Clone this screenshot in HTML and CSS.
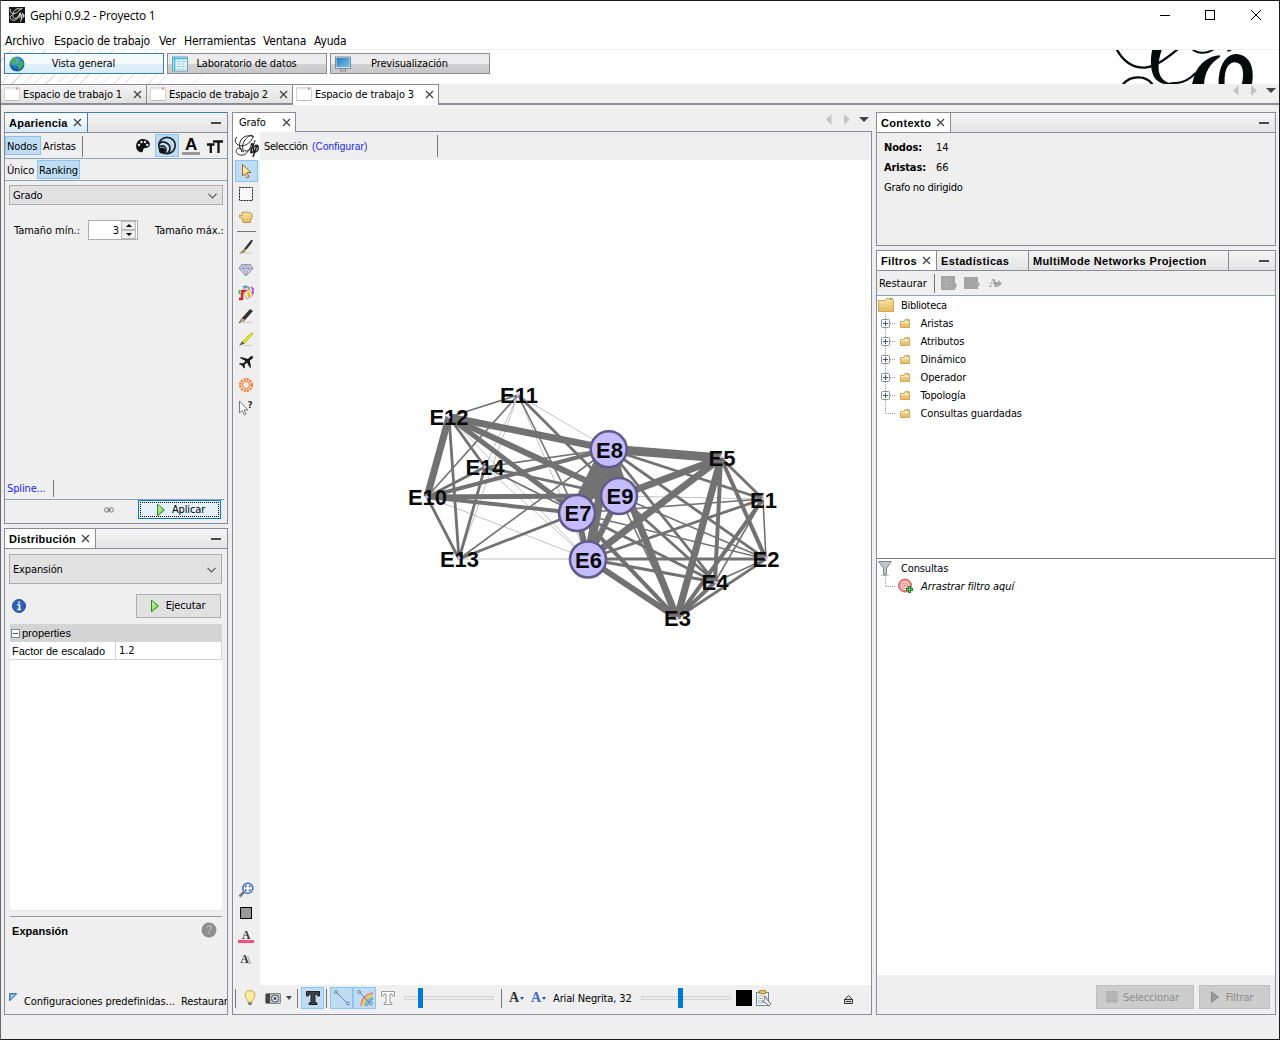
FILE: index.html
```html
<!DOCTYPE html>
<html lang="es">
<head>
<meta charset="utf-8">
<title>Gephi 0.9.2 - Proyecto 1</title>
<link rel="stylesheet" href="styles.css">
</head>
<body>
<svg class="defs" width="0" height="0">
  <defs>
    <linearGradient id="gold" x1="0" y1="0" x2="0" y2="1"><stop offset="0" stop-color="#fbe6a6"/><stop offset="1" stop-color="#e3b95f"/></linearGradient>
    <linearGradient id="play" x1="0" y1="0" x2="1" y2="1"><stop offset="0" stop-color="#e4f7c6"/><stop offset="1" stop-color="#5cbb2c"/></linearGradient>
    <linearGradient id="screen" x1="0" y1="0" x2="1" y2="1"><stop offset="0" stop-color="#2b7cc0"/><stop offset="1" stop-color="#72c0f0"/></linearGradient>
    <radialGradient id="globe" cx=".4" cy=".3"><stop offset="0" stop-color="#6cc4ee"/><stop offset="1" stop-color="#1761a8"/></radialGradient>
  </defs>
  <symbol id="x" viewBox="0 0 9 9"><path d="M1 1L8 8M8 1L1 8" stroke="#444" stroke-width="1.300" fill="none"/></symbol>
  <symbol id="plus" viewBox="0 0 9 9"><rect x=".5" y=".5" width="8" height="8" rx="1" fill="#fafafa" stroke="#8f8f8f"/><path d="M2 4.500H7M4.500 2V7" stroke="#3b56a0"/></symbol>
  <symbol id="folder" viewBox="0 0 16 14"><path d="M.5 13.500V2.500H7L8.500.5H14.500L15.500 2.500V13.500Z" fill="url(#gold)" stroke="#cfa457"/><path d="M12 1.500H14" stroke="#3bb8e8"/></symbol>
  <symbol id="folder-s" viewBox="0 0 10 9"><path d="M.5 8.500V2.500H4L5 .5H9L9.500 2V8.500Z" fill="url(#gold)" stroke="#d3a659"/><path d="M1 3.500H9" stroke="#fff1c4"/><path d="M7 1.500H8.500" stroke="#57b9d8"/></symbol>
  <symbol id="sheet" viewBox="0 0 16 14"><path d="M.5.500H15.500V13.500H.5Z" fill="#fff" stroke="#d4d4d4"/><path d="M1 1.500H15" stroke="#e7e7e7" stroke-width="2"/><path d="M13 .500V2.500" stroke="#d98c8c" stroke-width="2"/><path d="M1 13.500H15" stroke="#bbb"/></symbol>
  <symbol id="run" viewBox="0 0 8 12"><path d="M.5.200V11.800L7.500 6Z" fill="url(#play)" stroke="#258b15"/></symbol>
  <symbol id="chev" viewBox="0 0 9 6"><path d="M.5.800L4.500 4.800L8.500.800" fill="none" stroke="#555" stroke-width="1.200"/></symbol>
  <symbol id="script" viewBox="0 0 26 24"><g fill="none" stroke="#222" stroke-width="1"><path d="M3 3C-1 6 2 12 8 12C15 11 19 5 19 2C18 0 14 2 11 6C7 12 8 17 12 17C16 17 20 12 21 6M20 3C17 1 10 1 7 6C4 11 6 17 10 18M18 9C15 18 11 22 6 21C1 20 1 15 5 14C8 14 9 17 7 18"/><path d="M17 11C19 9 20 10 18 14C16 19 17 20 20 17" stroke-width="1.800"/><path d="M20 17C18 13 22 10 24 12C25 16 22 19 20 18M23 11L19 23" stroke-width="1.500"/></g></symbol>
</svg>

<div class="window">
  <header class="titlebar">
    <svg class="app-icon" width="16" height="16" viewBox="0 0 26 26"><rect width="26" height="26" fill="#161616"/><g fill="none" stroke="#eee" stroke-width="1.500"><path d="M2 3C1 11 9 13 14 8C19 2 23 2 21 3C20 5 17 2 13 3C7 5 5 13 7 17C9 21 15 17 19 9C15 19 11 23 5 21C1 19 1 15 5 13"/><path d="M16 11C20 8 18 20 16 17M24 12C25 19 18 20 20 14C22 9 25 13 24 16M22 10L19 24"/></g></svg>
    <span class="title">Gephi 0.9.2 - Proyecto 1</span>
    <svg class="controls" width="102" height="12" viewBox="0 0 102 12" fill="none" stroke="#000"><path d="M0 5.500H10"/><rect x="45.500" y=".5" width="9" height="9"/><path d="M91 0L101 10M101 0L91 10"/></svg>
  </header>
  <nav class="menubar"><span class="m1">Archivo</span><span class="m2">Espacio de trabajo</span><span class="m3">Ver</span><span class="m4">Herramientas</span><span class="m5">Ventana</span><span>Ayuda</span></nav>

  <div class="banner">
    <button class="persp on"><svg width="16" height="16" viewBox="0 0 16 16"><circle cx="8" cy="8" r="7.500" fill="url(#globe)"/><path d="M2 4C4 1 7 1 8 2L7 4L8 6L5 7L5 9L2 8ZM9 6L13 5L15 8L12 12L10 14L9 10ZM10 2L13 3L12 4Z" fill="#46ad57"/></svg><span>Vista general</span></button>
    <button class="persp"><svg width="16" height="16" viewBox="0 0 16 16"><rect x=".5" y="1" width="15" height="14" fill="#fff" stroke="#6aa2b8"/><path d="M1 2.500H15M2.500 1V15" stroke="#51c0e4" stroke-width="2"/><path d="M4 5.500H15M4 8H15M4 10.500H15M4 13H15M7 4V15M11 4V15" stroke="#9fd8ea"/></svg><span>Laboratorio de datos</span></button>
    <button class="persp"><svg width="16" height="16" viewBox="0 0 16 16"><rect x=".5" y="1" width="15" height="11.500" fill="#ddd" stroke="#78909c"/><rect x="1.500" y="2" width="13" height="9" fill="url(#screen)"/><path d="M5.500 13H10.500V15H5.500Z" fill="#ddd" stroke="#888"/></svg><span>Previsualización</span></button>
    <svg class="brand" width="144" height="34" viewBox="100 150 432 102"><g fill="none" stroke="#060a0a"><path d="M110 146C132 188 164 204 196 203C232 198 266 171 296 146" stroke-width="7"/><path d="M128 256C148 226 200 222 220 256" stroke-width="7"/><path d="M338 148C356 164 386 160 405 146" stroke-width="6"/><path d="M348 219C330 238 306 252 276 249" stroke-width="6"/><path d="M443 153C449 153 452 151 455 148" stroke-width="5"/></g><g fill="#060a0a"><path d="M218 148H247C230 193 232 238 266 248L300 245C275 258 238 258 222 229C210 203 213 169 218 148Z"/><path d="M421 166L421 171C390 190 374 220 373 256H336L346 220C362 188 388 168 421 166Z"/><path d="M417 256C415 196 440 160 472 162C510 166 527 203 516 256H486C496 211 488 187 463 187C440 191 433 218 435 256Z"/></g></svg>
  </div>

  <div class="doc-tabs">
    <div class="doc-tab"><svg width="16" height="14"><use href="#sheet"/></svg><span>Espacio de trabajo 1</span><svg width="9" height="9"><use href="#x"/></svg></div>
    <div class="doc-tab"><svg width="16" height="14"><use href="#sheet"/></svg><span>Espacio de trabajo 2</span><svg width="9" height="9"><use href="#x"/></svg></div>
    <div class="doc-tab on"><svg width="16" height="14"><use href="#sheet"/></svg><span>Espacio de trabajo 3</span><svg width="9" height="9"><use href="#x"/></svg></div>
    <svg class="tabnav" width="44" height="11" viewBox="0 0 44 11"><path d="M5.500 0V11L0 5.500ZM18 0V11L24 5.500Z" fill="#c5c5c5"/><path d="M33 3H43L38 8Z" fill="#444"/></svg>
  </div>

  <main class="main">
    <div class="left">
      <section class="panel appearance">
        <div class="head"><div class="tab on blue"><b>Apariencia</b><svg width="9" height="9"><use href="#x"/></svg></div><i class="min"></i></div>
        <div class="ap-row one">
          <span class="toggle">Nodos</span><span class="plain">Aristas</span><i class="vsep"></i>
          <svg class="ap-icons" width="89" height="24" viewBox="0 0 89 24">
            <path d="M8 4C0 4-1 15 5 17C10 19 6 12 11 13C17 13 16 4 8 4Z" fill="#111"/><g fill="#eee"><circle cx="4" cy="10" r="1.200"/><circle cx="6.500" cy="7" r="1.200"/><circle cx="10" cy="7" r="1.200"/><circle cx="12.300" cy="10" r="1.200"/></g>
            <rect x="20.500" y="-.5" width="23" height="22" fill="#bfdcf3" stroke="#8ac4f2"/><g fill="none" stroke="#1b2227" stroke-width="1.700"><circle cx="32" cy="10.500" r="8.200"/><path d="M24 9.500C26 4.500 35 7.500 35 13.500Q35 16.500 32 18.500M25 11.500Q30 9.500 31 14.500Q31 17.500 29 18.500"/></g><circle cx="27" cy="15.500" r="3" fill="#111"/>
            <text x="56" y="14.500" text-anchor="middle" class="letter-a">A</text><path d="M47 18.500H65" stroke="#999" stroke-width="3"/>
            <path d="M72 9.500H79.500M75.800 9.500V18M78 6.500H88M83.500 6.500V18" stroke="#111" stroke-width="2.300"/>
          </svg>
        </div>
        <div class="ap-row two"><span class="plain">Único</span><span class="toggle">Ranking</span></div>
        <div class="combo grade"><span>Grado</span><svg width="9" height="6"><use href="#chev"/></svg></div>
        <div class="sizes"><span class="smin">Tamaño mín.:</span><div class="spin"><span>3</span><div class="arrows"><i><svg width="6" height="3"><path d="M0 3H6L3 0Z"/></svg></i><i><svg width="6" height="3"><path d="M0 0H6L3 3Z"/></svg></i></div></div><span>Tamaño máx.:</span></div>
        <div class="spline"><a>Spline...</a><i class="vsep"></i></div>
        <div class="apply"><svg class="chain" width="10" height="6" viewBox="0 0 10 6" fill="none" stroke="#777"><rect x=".5" y=".8" width="4.500" height="4.300" rx="2"/><rect x="5" y=".8" width="4.500" height="4.300" rx="2"/><path d="M3 3H7"/></svg><button class="btn focus"><svg width="8" height="12"><use href="#run"/></svg><span>Aplicar</span></button></div>
      </section>

      <section class="panel layout">
        <div class="head"><div class="tab on"><b>Distribución</b><svg width="9" height="9"><use href="#x"/></svg></div><i class="min"></i></div>
        <div class="combo algo"><span>Expansión</span><svg width="9" height="6"><use href="#chev"/></svg></div>
        <div class="exec"><svg width="14" height="14" viewBox="0 0 14 14"><circle cx="7" cy="7" r="6.500" fill="#2d60b8" stroke="#234f9c"/><path d="M7 2.500V4.500M5.500 6H7.500V10.500M5.200 10.500H9" stroke="#fff" stroke-width="1.600" fill="none"/></svg><button class="btn"><svg width="8" height="12"><use href="#run"/></svg><span>Ejecutar</span></button></div>
        <div class="sheet">
          <div class="group"><svg width="9" height="9" viewBox="0 0 9 9"><rect x=".5" y=".5" width="8" height="8" fill="#fff" stroke="#888"/><path d="M2 4.500H7" stroke="#3b56a0"/></svg><span>properties</span></div>
          <div class="prop"><span class="pname">Factor de escalado</span><span class="pval">1.2</span></div>
        </div>
        <div class="desc"><b>Expansión</b><svg width="16" height="16" viewBox="0 0 16 16"><circle cx="8" cy="8" r="7.500" fill="#8d8d8d"/><text x="8" y="12" text-anchor="middle" class="qmark">?</text></svg></div>
        <div class="presets"><svg width="9" height="9" viewBox="0 0 9 9"><path d="M.7 1.700H7.700L.7 8.700Z" fill="#8fc8ec" stroke="#235c8c"/></svg><span class="cfg">Configuraciones predefinidas...</span><span>Restaurar</span></div>
      </section>
    </div>

    <section class="center">
      <div class="graph-head"><div class="gtab"><span>Grafo</span><svg width="9" height="9"><use href="#x"/></svg></div><div class="gline"><svg width="44" height="11" viewBox="0 0 44 11"><path d="M5.500 0V11L0 5.500ZM18 0V11L24 5.500Z" fill="#c5c5c5"/><path d="M33 3H43L38 8Z" fill="#444"/></svg></div></div>
      <div class="graph-body">
        <div class="gtools">
          <div class="logo"><svg width="26" height="24"><use href="#script"/></svg></div>
          <div class="tool sel"><svg viewBox="0 0 16 16"><path d="M3.500 1.500V13L6 10.500L8 15L10 14L8 9.500H12Z" fill="#ffe3a2" stroke="#8d6c36"/></svg></div>
          <div class="tool"><svg viewBox="0 0 16 16"><rect x="1.500" y="1.500" width="13" height="13" fill="#f8f8f8" stroke="#111" stroke-dasharray="2 1"/></svg></div>
          <div class="tool"><svg viewBox="0 0 16 16"><path d="M5 13.500L4.500 11L1.500 8V6L4 7V3.500L6 3L7 4L8.500 2.500L10 4L12 3L14 5V9L12.500 11V13.500Z" fill="url(#gold)" stroke="#b5822f" stroke-width=".8"/></svg></div>
          <i class="hsep"></i>
          <div class="tool"><svg viewBox="0 0 16 16"><path d="M4 14H14" stroke="#ccc"/><path d="M6 10L13 1L15 1L13 5L8 11Z" fill="#333"/><path d="M5.500 10L8 12L5 14L1 15Z" fill="#9d8759"/></svg></div>
          <div class="tool"><svg viewBox="0 0 16 16"><path d="M3.500 2.500H12.500L15 6.500L8 14L1 6.500Z" fill="#cfcfe6" stroke="#9292b1"/><path d="M1 6.500H15M4 3L5.500 6.500L8 14L10.500 6.500L12 3M8 3L5.500 6.500M8 3L10.500 6.500" stroke="#8c8cad" stroke-width=".7" fill="none"/></svg></div>
          <div class="tool"><svg viewBox="0 0 16 16"><path d="M1.500 5V9" stroke="#4ab660" stroke-width="2"/><path d="M5 2.500L9 1.500" stroke="#58a9d6" stroke-width="3"/><path d="M13 2L15 4V9" fill="none" stroke="#b664ca" stroke-width="2"/><path d="M3 6H7L4 9V14H1" fill="none" stroke="#cf2927" stroke-width="2.500"/><path d="M5.500 8L11 4L15 10L9 14Z" fill="#fff2cc" stroke="#9c7667" stroke-width=".7"/><path d="M9 7L10 12L12.500 11L11 6Z" fill="#f2b51c"/><path d="M8 2H11V5" fill="none" stroke="#777"/></svg></div>
          <div class="tool"><svg viewBox="0 0 16 16"><path d="M5 14.500H14" stroke="#ccc"/><path d="M4 10L12 1L15 3L7 12Z" fill="#333"/><path d="M4 10L7 12L1 15Z" fill="#e5bd78" stroke="#333" stroke-width=".6"/></svg></div>
          <div class="tool"><svg viewBox="0 0 16 16"><path d="M5 14.500H14" stroke="#ccc"/><path d="M4 11L13.500 1.500L15 3L6 13Z" fill="#eee71f" stroke="#a5a01e" stroke-width=".7"/><path d="M4 10.500L6.500 12.500L1 15Z" fill="#555"/></svg></div>
          <div class="tool"><svg viewBox="0 0 16 16"><path d="M15 2.500Q13 1 10 5L3 3L2 4L7.500 7L5 9.500L2 9L1 10L4 11.500L6 14.500L7 13.500L6.500 11L9 8.500L12 14L13 13L11.800 6.500Q16 4 15 2.500Z" fill="#171717"/></svg></div>
          <div class="tool"><svg viewBox="0 0 16 16"><g fill="none" stroke="#ff782c"><circle cx="8" cy="8" r="5.800" stroke-width="2.500" stroke-dasharray="2 1.037"/><circle cx="8" cy="8" r="3.500"/></g></svg></div>
          <div class="tool"><svg viewBox="0 0 16 16"><path d="M1.500 1V13L4 10.500L6.500 15L8 14L6 10H10Z" fill="#fff" stroke="#777"/><text x="9.500" y="7.500" class="help-mark">?</text></svg></div>
          <div class="grow"></div>
          <div class="tool"><svg viewBox="0 0 16 16"><path d="M6 10L1.500 14.500" stroke="#777" stroke-width="2.500"/><circle cx="9.800" cy="6.200" r="5" fill="#fff" stroke="#3e65c8" stroke-width="1.500"/><path d="M7.500 5.500V4H9M10.500 4H12V5.500M12 7V8.500H10.500M9 8.500H7.500V7" fill="none" stroke="#26489b"/></svg></div>
          <div class="tool"><svg viewBox="0 0 16 16"><rect x="2.500" y="2.500" width="11" height="11" fill="#999" stroke="#000"/></svg></div>
          <div class="tool"><svg viewBox="0 0 16 16"><text x="8" y="10.500" text-anchor="middle" class="serif-s">A</text><path d="M0 13.500H16" stroke="#ff4d82" stroke-width="3"/></svg></div>
          <div class="tool"><svg viewBox="0 0 16 16"><text x="6.500" y="12" text-anchor="middle" class="serif-s shade">A</text></svg></div>
        </div>
        <div class="gview">
          <div class="selbar"><span class="seltext">Selección</span><a>(Configurar)</a><i class="vsep"></i></div>
          <svg class="graph" width="611" height="825" viewBox="260 160 611 825">
            <g stroke="#727272" fill="none">
              <g stroke-width=".6" stroke="#999"><path d="M518 395L485 467M518 395L459 559M518 395L609 449M518 395L588 559M449 417L588 559M485 467L588 559M427 497L588 559M459 559L588 559M619 496L763 499"/></g>
              <g stroke-width="1.600"><path d="M518 395L449 417M518 395L427 497M518 395L577 513M485 467L609 449M485 467L577 513M459 559L609 449M619 496L766 559M577 513L766 559M577 513L763 499M763 499L766 559M763 499L715 582M766 559L715 582M619 496L677 618"/></g>
              <g stroke-width="2.800"><path d="M518 395L619 496M449 417L485 467M427 497L485 467M427 497L459 559M485 467L619 496M485 467L459 559M449 417L459 559M459 559L577 513M609 449L763 499M609 449L766 559M609 449L715 582M588 559L763 499M588 559L715 582M577 513L715 582M619 496L715 582M721 458L763 499M766 559L677 618M588 559L766 559"/></g>
              <g stroke-width="4"><path d="M427 497L609 449M427 497L577 513M721 458L766 559M721 458L715 582M763 499L677 618M715 582L677 618M577 513L677 618"/></g>
              <g stroke-width="5"><path d="M427 497L619 496M449 417L577 513"/></g>
              <g stroke-width="6"><path d="M449 417L619 496M588 559L677 618M619 496L588 559M577 513L588 559"/></g>
              <g stroke-width="7"><path d="M449 417L427 497M449 417L609 449M609 449L677 618M619 496L721 458M588 559L721 458M721 458L677 618"/></g>
              <path d="M609 449L721 458" stroke-width="9"/><path d="M609 449L588 559" stroke-width="9"/>
              <path d="M609 449L577 513" stroke-width="16"/><path d="M609 449L619 496" stroke-width="16"/>
            </g>
            <g fill="#c4bcff" stroke="#625b8a" stroke-width="2.600"><circle cx="608.700" cy="449.300" r="18"/><circle cx="619" cy="496" r="18"/><circle cx="577" cy="513" r="18"/><circle cx="588" cy="559.500" r="18"/></g>
            <g class="labels" text-anchor="middle"><text x="519" y="402.500">E11</text><text x="449" y="424.700">E12</text><text x="485" y="475">E14</text><text x="427.500" y="505">E10</text><text x="459.500" y="566.500">E13</text><text x="609.500" y="457.500">E8</text><text x="620" y="504">E9</text><text x="578" y="521">E7</text><text x="588.500" y="567.500">E6</text><text x="722" y="465.500">E5</text><text x="763.500" y="507.500">E1</text><text x="766" y="566.500">E2</text><text x="715" y="590">E4</text><text x="677.500" y="626">E3</text></g>
            <g fill="#c4bcff"><circle cx="518" cy="395" r="1.500"/><circle cx="449" cy="417" r="1.500"/><circle cx="485" cy="467" r="1.500"/><circle cx="427" cy="497" r="1.500"/><circle cx="459" cy="558" r="1.500"/><circle cx="721" cy="457" r="1.500"/><circle cx="763" cy="499" r="1.500"/><circle cx="766" cy="558" r="1.500"/><circle cx="715" cy="582" r="1.500"/><circle cx="677" cy="618" r="1.500"/></g>
          </svg>
        </div>
      </div>
      <div class="gbottom">
        <i class="vsep"></i>
        <svg class="bulb" width="16" height="16" viewBox="0 0 16 16"><path d="M6 12C6 9 3 8 3 5C3 2 5 .7 8 .7S13 2 13 5C13 8 10 9 10 12Z" fill="#ffeb99" stroke="#c9a64f"/><path d="M6 12.500H10V14L8 15.500L6 14Z" fill="#777"/></svg>
        <svg class="cam" width="16" height="13" viewBox="0 0 16 13"><rect x=".5" y="1.500" width="15" height="10" rx="1" fill="#bbb" stroke="#888"/><rect x="1" y="2" width="4" height="9" fill="#444"/><circle cx="10" cy="6.500" r="3.500" fill="#eee" stroke="#555"/><circle cx="10" cy="6.500" r="1.800" fill="#536c9b"/></svg>
        <svg class="drop" width="6" height="4"><path d="M0 0H6L3 4Z" fill="#444"/></svg>
        <i class="vsep s2"></i>
        <div class="cell sel"><svg width="16" height="16" viewBox="0 0 16 16"><path d="M1.500 1.500H14.500V6H12.500L12 4H10V12.500L12 13V14.500H4V13L6 12.500V4H4L3.500 6H1.500Z" fill="#3d4349" stroke="#222"/></svg></div>
        <i class="vsep s3"></i>
        <div class="cell sel"><svg width="16" height="16" viewBox="0 0 16 16"><path d="M2 2L14 14" stroke="#5d87b9"/><circle cx="2" cy="2" r="1.400" fill="#fff" stroke="#4c78b0"/><circle cx="14" cy="13.500" r="1.400" fill="#fff" stroke="#4c78b0"/></svg></div><div class="cell sel"><svg width="16" height="16" viewBox="0 0 16 16"><g fill="none" stroke-width="1.800"><path d="M4 16Q5 5 16 3" stroke="#ea887b"/><path d="M6 16Q7 7 16 5" stroke="#e8cf68"/><path d="M8 16Q9 9 16 7" stroke="#76c394"/><path d="M10 16Q11 11 16 9" stroke="#7a96db"/></g><path d="M2 2L14 14" stroke="#5d87b9"/><circle cx="2" cy="2" r="1.400" fill="#fff" stroke="#4c78b0"/><circle cx="14" cy="13.500" r="1.400" fill="#fff" stroke="#4c78b0"/></svg></div><div class="cell"><svg width="16" height="16" viewBox="0 0 16 16"><path d="M1.500 1.500H14.500V6H12.500L12 4H10V12.500L12 13V14.500H4V13L6 12.500V4H4L3.500 6H1.500Z" fill="#f8f8f8" stroke="#999"/></svg></div>
        <div class="slider first"><i></i></div>
        <i class="vsep s4"></i>
        <span class="font-a">A</span><svg class="dd" width="4" height="3"><path d="M0 0H4L2 3Z" fill="#2c50a4"/></svg>
        <span class="font-a blue-a">A</span><svg class="dd" width="4" height="3"><path d="M0 0H4L2 3Z" fill="#2c50a4"/></svg>
        <span class="fname">Arial Negrita, 32</span>
        <div class="slider second"><i></i></div>
        <i class="black"></i>
        <svg class="clip" width="17" height="17" viewBox="0 0 17 17"><rect x="1.500" y="2.500" width="12" height="13" fill="#f6fafc" stroke="#6b8794"/><rect x="4" y=".7" width="7" height="3" rx="1" fill="#eac363" stroke="#a07b2c"/><path d="M3 6H11M3 8.500H8M3 11H7M3 13H8" stroke="#9fb3bc"/><path d="M9 7Q12 6 12 9L13 11L16 14L14 16L11 13Q8 13 7 11L9 11L10 9Z" fill="#eee" stroke="#555" stroke-width=".8"/></svg>
        <svg class="eject" width="9" height="9" viewBox="0 0 9 9"><path d="M.5 4.500L4.500.700L8.500 4.500V8.500H.5ZM0 4.500H9M2 6.500H7" fill="#ddd" stroke="#333"/></svg>
      </div>
    </section>

    <div class="right">
      <section class="panel context">
        <div class="head"><div class="tab on"><b>Contexto</b><svg width="9" height="9"><use href="#x"/></svg></div><i class="min"></i></div>
        <div class="facts"><div><b>Nodos:</b><span>14</span></div><div><b>Aristas:</b><span>66</span></div><div><span>Grafo no dirigido</span></div></div>
      </section>
      <section class="panel filters">
        <div class="head"><div class="tab on"><b>Filtros</b><svg width="9" height="9"><use href="#x"/></svg></div><div class="tab off est"><b>Estadísticas</b></div><div class="tab off multi"><b>MultiMode Networks Projection</b></div><i class="min"></i></div>
        <div class="ftools"><span>Restaurar</span><i class="vsep"></i><svg width="62" height="16" viewBox="0 0 62 16"><g fill="#a4a4a4"><rect x="0" y="1" width="14" height="14"/><path d="M11 9H14V7L16 10.500L14 14V12H11Z"/><rect x="23" y="2" width="14" height="12"/><path d="M33 8H36V6L39 9.500L36 13V11H33Z"/><path d="M53 7H57V5L61 8.500L57 12V10H53Z"/></g><path d="M1 5H11M1 8H11M1 11H11M5 2V14" stroke="#b2b2b2"/><text x="48" y="12" class="fa">A</text></svg></div>
        <div class="tree">
          <div class="row root"><svg width="16" height="14"><use href="#folder"/></svg><span>Biblioteca</span></div>
          <div class="row kid"><svg class="pm" width="9" height="9"><use href="#plus"/></svg><svg class="fo" width="10" height="9"><use href="#folder-s"/></svg><span>Aristas</span></div>
          <div class="row kid"><svg class="pm" width="9" height="9"><use href="#plus"/></svg><svg class="fo" width="10" height="9"><use href="#folder-s"/></svg><span>Atributos</span></div>
          <div class="row kid"><svg class="pm" width="9" height="9"><use href="#plus"/></svg><svg class="fo" width="10" height="9"><use href="#folder-s"/></svg><span>Dinámico</span></div>
          <div class="row kid"><svg class="pm" width="9" height="9"><use href="#plus"/></svg><svg class="fo" width="10" height="9"><use href="#folder-s"/></svg><span>Operador</span></div>
          <div class="row kid"><svg class="pm" width="9" height="9"><use href="#plus"/></svg><svg class="fo" width="10" height="9"><use href="#folder-s"/></svg><span>Topología</span></div>
          <div class="row kid last"><svg class="pm" width="9" height="9"></svg><svg class="fo" width="10" height="9"><use href="#folder-s"/></svg><span>Consultas guardadas</span></div>
        </div>
        <div class="queries">
          <div class="row root"><svg width="14" height="16" viewBox="0 0 14 16"><path d="M.5 1.500H13.500L8.500 8V14.500H5.500V8Z" fill="#c1c4ca" stroke="#83868d"/><path d="M3 15.500H11" stroke="#bbb"/></svg><span>Consultas</span></div>
          <div class="row kid last drag"><svg class="target" width="16" height="16" viewBox="0 0 16 16"><circle cx="7" cy="7.500" r="6.500" fill="#f2827e" stroke="#d05a5a"/><circle cx="7" cy="7.500" r="4" fill="#f58a86" stroke="#fff"/><circle cx="7" cy="7.500" r="1.600" fill="#d66" stroke="#fff"/><path d="M11.500 8V15M8 11.500H15" stroke="#21812d" stroke-width="3"/><path d="M11.500 9V14M9 11.500H14" stroke="#5fc55c"/></svg><em>Arrastrar filtro aquí</em></div>
        </div>
        <div class="factions"><button class="btn dis b1"><svg width="14" height="14" viewBox="0 0 14 14"><path d="M1 1H13V13H1Z" fill="#aaa"/><path d="M1 3H13M1 6H13M1 9H13M1 12H13M3 1V13M6 1V13M9 1V13M12 1V13" stroke="#bdbdbd"/></svg><span>Seleccionar</span></button><button class="btn dis b2"><svg width="8" height="12" viewBox="0 0 8 12"><path d="M.5.700V11.300L7.300 6Z" fill="#9b9b9b" stroke="#858585"/></svg><span>Filtrar</span></button></div>
      </section>
    </div>
  </main>
</div>
</body>
</html>
```
FILE: styles.css
```css
* { box-sizing: border-box; }
body { margin: 0; font: 11px/14px "DejaVu Sans Condensed", "DejaVu Sans", sans-serif; letter-spacing: -.14px; color: #000; }
svg { display: block; flex: none; overflow: visible; }
span, b, a, em { white-space: nowrap; }
i { display: block; flex: none; }
button { font: inherit; color: inherit; letter-spacing: inherit; padding: 0; margin: 0; }
.defs { position: absolute; }
.window { width: 1280px; height: 1040px; display: flex; flex-direction: column; background: #efefef; border: 1px solid #1b1a1e; border-left-color: #69656c; overflow: hidden; }
.titlebar { height: 30px; background: #fff; display: flex; align-items: center; padding: 0 17px 0 8px; flex: none; }
.app-icon { margin-bottom: 2px; }
.title { font: 12px/16px "Open Sans", sans-serif; letter-spacing: -.3px; margin-left: 5px; }
.controls { margin-left: auto; }
.menubar { height: 19px; background: #fff; border-bottom: 1px solid #efefef; display: flex; padding: 3px 0 0 4px; font: 12px/14px "DejaVu Sans Condensed", sans-serif; letter-spacing: -.15px; flex: none; }
.m1 { width: 49px; } .m2 { width: 105px; letter-spacing: -.24px; } .m3 { width: 25px; } .m4 { width: 79px; } .m5 { width: 51px; }
.banner { height: 34px; flex: none; display: flex; gap: 3px; padding: 3px 22px 0 3px; background: linear-gradient(90deg, transparent, #fff 300px), repeating-linear-gradient(135deg, #fff 0 7px, #d9d9d9 7px 8px); }
.persp { width: 160px; height: 21px; display: flex; align-items: center; border: 1px solid #898b96; background: linear-gradient(#ececec 50%, #d2d2d2 50%, #c8c8c8); padding-left: 5px; }
.persp svg { margin-left: -1px; }
.persp span { flex: 1; text-align: center; padding-right: 21px; }
.persp.on { border-color: #3c7fb1; background: linear-gradient(#f4fafe 50%, #e1f1fb 50%, #d8ecf8); }
.brand { margin: -3px 0 0 auto; overflow: hidden; }
.doc-tabs { height: 21px; flex: none; display: flex; border-bottom: 2px solid #898b96; }
.doc-tab { width: 146px; height: 19px; display: flex; align-items: center; border: solid #898b96; border-width: 1px 1px 0 0; background: linear-gradient(#f4f4f4, #e2e2e2); padding: 0 4px 0 3px; }
.doc-tab span { margin-left: 3px; flex: 1; padding-top: 2px; letter-spacing: -.11px; }
.doc-tab.on { height: 21px; background: #fff; padding-bottom: 2px; }
.tabnav { margin: 1px 2px 0 auto; }
.main { display: flex; gap: 4px; padding: 7px 3px 24px; flex: 1; min-height: 0; }
.left { width: 224px; display: flex; flex-direction: column; gap: 4px; flex: none; }
.right { width: 400px; display: flex; flex-direction: column; gap: 4px; flex: none; }
.panel { border: 1px solid #898b96; overflow: hidden; display: flex; flex-direction: column; }
.head { height: 20px; flex: none; display: flex; border-bottom: 1px solid #898b96; background: linear-gradient(#f4f4f4, #e4e4e4); }
.head b { font: bold 11px/15px "Liberation Sans", sans-serif; letter-spacing: .24px; padding-top: 2px; }
.context .head b, .filters .head b { letter-spacing: .34px; }
.tab { display: flex; align-items: center; gap: 5px; padding: 0 5px 0 4px; border-right: 1px solid #898b96; }
.tab.on { background: #fff; }
.tab.blue { background: linear-gradient(#fff, #d7ebf8); border-right-color: #3c7fb1; }
.min { width: 10px; height: 2px; background: #4a4a4a; margin: 9px 6px 0 auto; }
.vsep { width: 1px; background: #777; }
.appearance { height: 412px; flex: none; border-top-color: #3c7fb1; }
.ap-row { display: flex; border-bottom: 1px solid #89a3ba; flex: none; }
.ap-row.one { height: 26px; padding: 2px 3px 0 0; }
.ap-row.two { height: 22px; padding: 1px 0 0 2px; }
.toggle { background: #bfdcf3; border: 1px solid #8ac4f2; height: 19px; line-height: 19px; padding: 0 1px; letter-spacing: -.15px; }
.one .toggle { width: 36px; margin-top: 1px; }
.one .plain { margin: 5px 6px 0 2px; }
.one .vsep { height: 21px; margin-top: 1px; }
.ap-icons { margin-left: auto; }
.two .plain { width: 30px; margin-top: 4px; }
.letter-a { font: bold 17px "Liberation Sans", sans-serif; }
.combo { display: flex; align-items: center; justify-content: space-between; border: 1px solid #adadad; background: #e1e1e1; padding: 1px 5px 0 3px; flex: none; }
.grade { margin: 4px 4px 0; height: 20px; }
.sizes { display: flex; align-items: center; margin: 15px 0 0 9px; height: 20px; flex: none; letter-spacing: -.05px; }
.sizes span { padding-top: 1px; }
.smin { width: 74px; }
.spin { width: 50px; height: 20px; border: 1px solid #adadad; background: #fff; display: flex; justify-content: flex-end; align-items: center; margin-right: 17px; }
.arrows { width: 15px; margin: 0 1px 0 2px; }
.arrows i { height: 9px; border: 1px solid #bbb; background: #eee; display: grid; place-items: center; }
.spline { display: flex; align-items: center; margin-top: auto; height: 20px; margin-bottom: 1px; padding-left: 2px; flex: none; }
a { color: #1526ff; }
.spline a { padding-top: 1px; }
.spline .vsep { height: 17px; margin-left: 7px; }
.apply { height: 24px; border-top: 1px solid #89a3ba; margin-right: 3px; display: flex; justify-content: flex-end; flex: none; }
.chain { margin: 7px 24px 0 0; }
.btn { display: flex; align-items: center; justify-content: center; gap: 7px; border: 1px solid #adadad; background: #e1e1e1; }
.focus { width: 83px; height: 19px; margin: 0 3px 0 0; padding-left: 3px; border-color: #0078d7; background: #e5f1fb; outline: 1px dotted #000; outline-offset: -3px; }
.layout { flex: 1; }
.algo { height: 30px; margin: 5px 5px 0 4px; }
.exec { display: flex; justify-content: space-between; height: 24px; margin: 11px 6px 5px 7px; align-items: center; flex: none; }
.exec > svg { margin-bottom: 3px; }
.exec .btn { width: 85px; height: 24px; margin-top: -2px; padding-right: 1px; }
.sheet { background: #fff; height: 287px; margin: 0 5px 0 5px; border-bottom: 1px solid #e7e7e7; flex: none; }
.group { height: 18px; background: #d4d4d4; display: flex; align-items: center; gap: 2px; padding-left: 1px; }
.prop { height: 18px; display: flex; border-bottom: 1px solid #d4d4d4; border-right: 1px solid #d4d4d4; font: 11px/19px "Liberation Sans", sans-serif; }
.group span { font: 11px/16px "Liberation Sans", sans-serif; letter-spacing: 0; }
.pname { width: 106px; border-right: 1px solid #d4d4d4; padding-left: 2px; letter-spacing: -.03px; }
.pval { font: 11px/18px "DejaVu Sans Condensed", sans-serif; padding-left: 3px; }
.desc { border-top: 1px solid #999; margin: 5px 5px 0 5px; padding: 5px 5px 0 2px; display: flex; justify-content: space-between; flex: none; }
.desc b { font: bold 11px/18px "Liberation Sans", sans-serif; letter-spacing: .05px; }
.qmark { font: bold 12px "Liberation Sans", sans-serif; fill: #b0b0b0; }
.presets { display: flex; margin-top: auto; height: 22px; padding-left: 4px; overflow: hidden; flex: none; }
.cfg { width: 157px; margin-left: 6px; letter-spacing: -.1px; }
.presets span { line-height: 19px; flex: none; }
.center { width: 640px; display: flex; flex-direction: column; flex: none; }
.graph-head { height: 20px; display: flex; flex: none; }
.gtab { width: 64px; display: flex; align-items: center; justify-content: space-between; padding: 0 4px 0 6px; border: solid #898b96; border-width: 1px 1px 0; background: #fff; }
.gline { flex: 1; border-bottom: 1px solid #898b96; display: flex; justify-content: flex-end; padding: 2px 2px 0 0; }
.graph-body { display: flex; height: 853px; border: solid #898b96; border-width: 0 1px; flex: none; }
.gtools { width: 27px; display: flex; flex-direction: column; align-items: flex-start; padding: 0 0 15px 2px; }
.logo { height: 28px; width: 27px; background: #fff; padding: 2px 0 0 1px; margin-left: -2px; flex: none; }
.tool { width: 23px; height: 23px; display: grid; place-items: center; flex: none; }
.tool.sel { height: 22px; }
.tool svg { width: 16px; height: 16px; margin: 0 1px 0 0; }
.tool.sel svg { margin: 0; }
.sel { background: #bfdcf3; border: 1px solid #8ac4f2; }
.hsep { width: 19px; height: 1px; background: #777; margin: 3px 0 3px 2px; }
.grow { flex: 1; }
.help-mark { font: bold 9px "DejaVu Sans", sans-serif; fill: #333; }
.serif-s { font: bold 11.5px "Liberation Serif", serif; fill: #333; }
.shade { filter: drop-shadow(3px 1px 0 #bbb); }
.gview { flex: 1; background: #fff; }
.selbar { height: 28px; background: #efefef; display: flex; padding: 3px 0 0 4px; }
.seltext { width: 48px; line-height: 23px; letter-spacing: -.5px; letter-spacing: -.6px; letter-spacing: -.4px; }
.selbar a { font: 10px/24px "Liberation Sans", sans-serif; letter-spacing: .17px; width: 125px; }
.selbar .vsep { height: 22px; }
.labels { font: bold 22px "Liberation Sans", sans-serif; letter-spacing: 0; fill: #0a0a0a; }
.gbottom { height: 30px; border: solid #898b96; border-width: 0 1px 1px; display: flex; align-items: center; padding: 0 0 3px 2px; flex: none; }
.gbottom .vsep { height: 19px; }
.bulb { margin-left: 6px; }
.cam { margin-left: 7px; }
.drop { margin-left: 5px; }
.gbottom .s2 { margin: 0 3px 0 5px; }
.gbottom .s3 { margin: 0 3px 0 2px; }
.cell { width: 23px; height: 22px; display: grid; place-items: center; }
.slider { width: 90px; height: 4px; border: 1px solid #d5d5d5; background: #e9e9e9; display: flex; align-items: center; flex: none; }
.slider i { width: 5px; height: 20px; background: #0078d7; }
.first { margin-left: 5px; padding-left: 13px; }
.second { margin-left: 9px; padding-left: 36px; }
.s4 { margin: 0 7px 0 7px; }
.font-a { font: bold 14px/16px "Liberation Serif", serif; color: #333; width: 10px; }
.blue-a { color: #4269c4; margin-left: 7px; }
.dd { margin-left: 1px; }
.fname { width: 79px; margin-left: 7px; padding-top: 1px; }
.black { width: 16px; height: 16px; background: #000; margin-left: 5px; }
.clip { margin-left: 3px; }
.eject { margin: 3px 0 0 72px; }
.context { height: 134px; flex: none; }
.facts { padding: 5px 0 0 7px; line-height: 20px; }
.facts div { display: flex; height: 20px; }
.facts div + div + div { letter-spacing: -.28px; }
.facts b { width: 52px; font: bold 11px/20px "DejaVu Sans Condensed", sans-serif; }
.filters { flex: 1; }
.filters .head .on { padding-right: 5px; }
.est { width: 92px; } .multi { width: 200px; }
.ftools { height: 25px; border-bottom: 1px solid #89a3ba; display: flex; align-items: center; padding-left: 2px; flex: none; }
.ftools span { padding-top: 1px; width: 49px; letter-spacing: -.03px; }
.ftools .vsep { height: 19px; margin: 0 6px 0 6px; }
.fa { font: bold 12px "Liberation Serif", serif; fill: #999; }
.tree { background: #fff; height: 263px; border-bottom: 1px solid #777; flex: none; }
.queries { background: #fff; flex: 1; }
.row { height: 18px; display: flex; align-items: center; }
.row span, .row em { padding-top: 2px; }
.root { padding-left: 1px; }
.root span { margin-left: 7px; letter-spacing: -.3px; }
.queries .root span { margin-left: 9px; letter-spacing: -.14px; }
.kid { padding-left: 4px; background: repeating-linear-gradient(90deg, #999 0 1px, transparent 1px 2px) 9px 9px / 10px 1px no-repeat, repeating-linear-gradient(#999 0 1px, transparent 1px 2px) 8px 0 / 1px 18px no-repeat; }
.kid.last { background-size: 10px 1px, 1px 9px; }
.fo { margin-left: 10px; }
.kid span { margin-left: 10.5px; }
.target { margin-left: 17px; }
.drag em { margin-left: 7px; letter-spacing: -.08px; }
.factions { height: 39px; display: flex; justify-content: flex-end; gap: 5px; padding: 10px 5px 0 0; flex: none; }
.dis { color: #8b8b8b; background: #ccc; border-color: #bfbfbf; height: 24px; gap: 4px; }
.dis span { padding-top: 1px; }
.b1 { width: 98px; padding-right: 6px; } .b2 { width: 71px; gap: 7px; padding-right: 5px; }
```
